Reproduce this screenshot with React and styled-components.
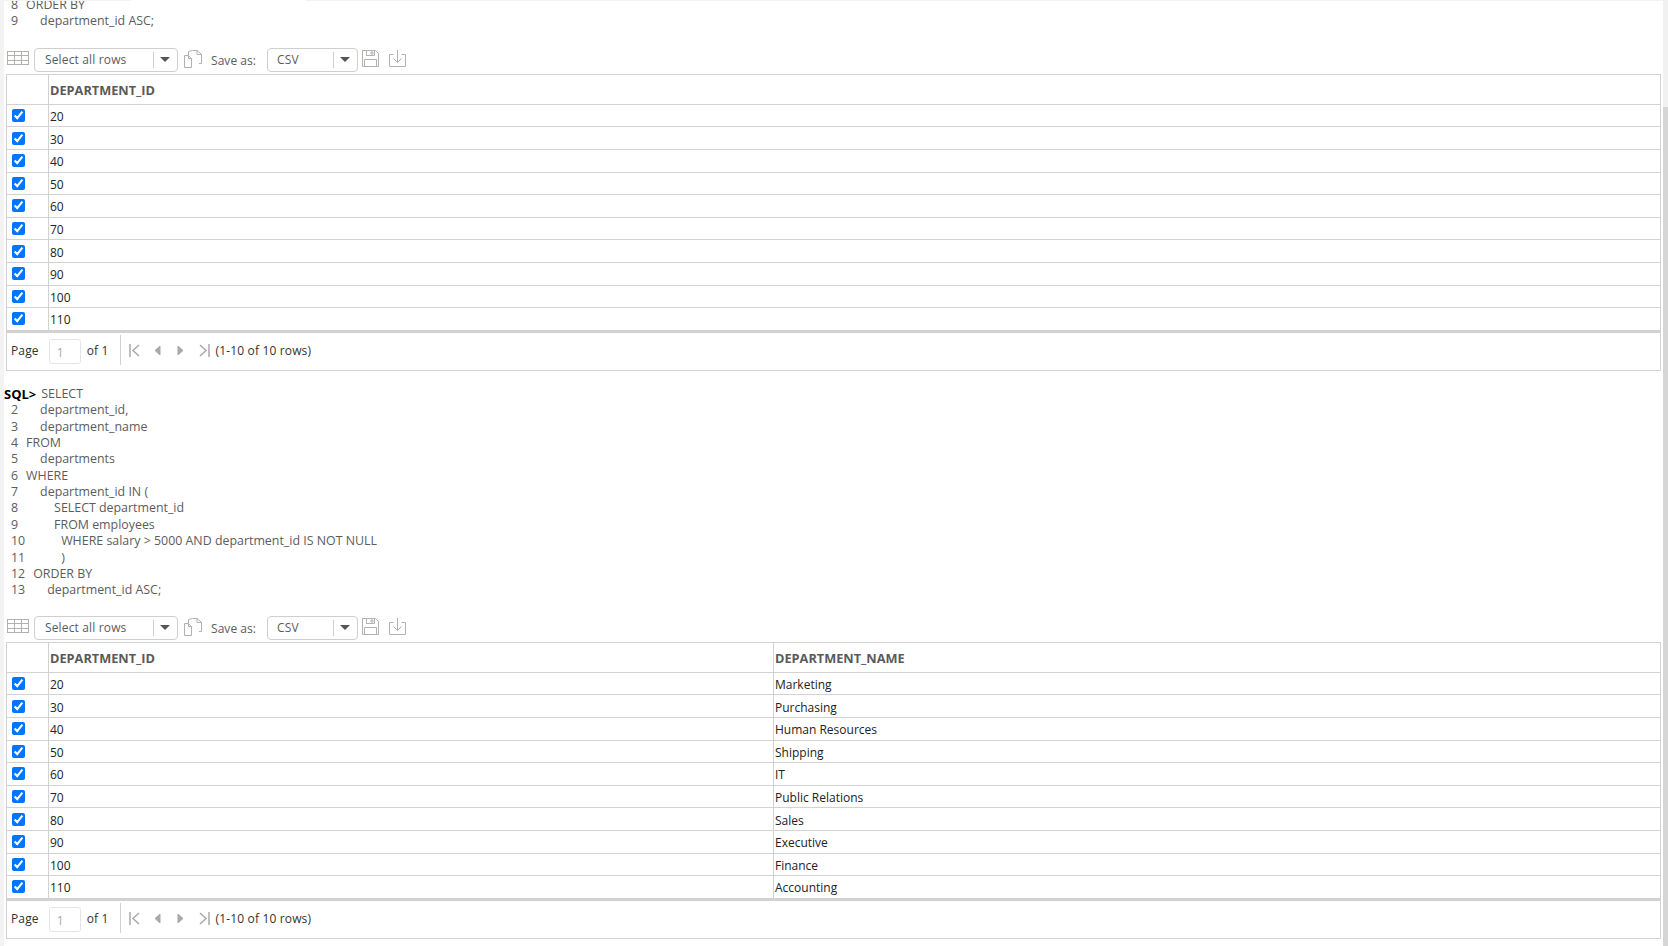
import React from 'react';
import styled, { createGlobalStyle } from 'styled-components';

const GlobalStyle = createGlobalStyle`
  html, body {
    margin: 0;
    height: 100%;
    overflow: hidden;
    background: #fff;
  }
  body {
    font-family: "Open Sans", "Noto Sans", "Liberation Sans", sans-serif;
    font-size: 12px;
  }
`;

const Page = styled.div`
  position: relative;
  height: 946px;
  overflow: hidden;
  padding-left: 4px;
  padding-right: 7px;
  background: linear-gradient(to right, #f3f3f3 4px, #fff 4px);
`;

const TopEdge = styled.div`
  position: absolute;
  top: 0;
  left: 0;
  right: 0;
  height: 1px;
  background: linear-gradient(to right, #f3f3f3 131px, #fff 131px, #fff 306px, #f3f3f3 306px);
`;

const ScrollTrack = styled.div`
  position: absolute;
  top: 0;
  right: 0;
  bottom: 0;
  width: 5px;
  background: #f1f1f1;
`;

const ScrollThumb = styled.div`
  margin-top: 107px;
  height: 839px;
  background: #d6d6d6;
`;

const Worksheet = styled.div`
  margin-top: -3px;
`;

const Code = styled.div`
  color: #5c5c5c;
  font-size: 12.4px;
  line-height: 16.4px;
  margin-top: ${p => p.$top || 0}px;
  margin-bottom: ${p => p.$gap}px;
`;

const CodeLine = styled.div`
  display: flex;
  white-space: pre;
  height: 16.4px;
  padding-left: 7px;
`;

const LineNo = styled.span`
  margin-right: 8px;
`;

const Statement = styled.span`
  margin-left: ${p => p.$indent * 14}px;
`;

const Prompt = styled.span`
  margin-left: -7px;
  margin-right: 5px;
  font-size: 13px;
  font-weight: 700;
  color: #000;
`;

const Toolbar = styled.div`
  display: flex;
  align-items: center;
  height: 24px;
  padding-left: 3px;
  margin-bottom: 2.5px;
  color: #5c5c5c;
`;

const Select = styled.div`
  display: flex;
  align-items: center;
  box-sizing: border-box;
  width: ${p => p.$width}px;
  height: 24px;
  margin-left: ${p => p.$left}px;
  border: 1px solid #cfcfcf;
  border-radius: 4px;
  background: #fff;
`;

const SelectValue = styled.div`
  flex: 1;
  padding-left: ${p => p.$pad}px;
  letter-spacing: 0.15px;
`;

const SelectArrow = styled.div`
  display: flex;
  align-items: center;
  justify-content: center;
  width: 24px;
  height: 16px;
  padding-right: 1px;
  box-sizing: border-box;
  border-left: 1px solid #cfcfcf;
  &::after {
    content: "";
    border-left: 5px solid transparent;
    border-right: 5px solid transparent;
    border-top: 5px solid #555;
  }
`;

const ToolIcon = styled.svg`
  flex: none;
  margin-left: ${p => p.$left}px;
  margin-top: ${p => p.$up * -2}px;
  fill: none;
  stroke: #b4b0ae;
  stroke-width: 1;
`;

const SaveLabel = styled.span`
  margin-left: 8px;
  padding-top: 2px;
  letter-spacing: 0.05px;
`;

const Grid = styled.div`
  margin-left: 2px;
  border: 1px solid #d2d2d2;
`;

const Row = styled.div`
  display: flex;
  box-sizing: border-box;
  height: ${p => (p.$head ? 29.5 : 22.6)}px;
  border-bottom: 1px solid #d2d2d2;
`;

const CheckCell = styled.div`
  display: flex;
  align-items: center;
  flex: none;
  width: 42px;
  padding-left: 5px;
  border-right: 1px solid #d2d2d2;
  box-sizing: border-box;
`;

const Check = styled.input`
  width: 13px;
  height: 13px;
  margin: 0;
`;

const Cell = styled.div`
  display: flex;
  align-items: center;
  flex: 1;
  box-sizing: border-box;
  padding-left: 1px;
  padding-top: ${p => (p.$head ? 1 : 2)}px;
  font-size: ${p => (p.$head ? 12.75 : 12)}px;
  color: ${p => (p.$head ? '#5a5a5a' : '#222')};
  font-weight: ${p => (p.$head ? 700 : 400)};
  ${p => p.$width && `flex: none; width: ${p.$width}px; border-right: 1px solid #d2d2d2;`}
`;

const Pager = styled.div`
  display: flex;
  align-items: center;
  height: 37px;
  padding-left: 4px;
  padding-bottom: 2px;
  box-sizing: border-box;
  height: 39px;
  border-top: 2px solid #d2d2d2;
  color: #333;
  letter-spacing: 0.15px;
`;

const PageInput = styled.div`
  box-sizing: border-box;
  width: 32px;
  height: 25px;
  margin: 2px 6px 0 10px;
  padding: 4px 0 0 7px;
  border: 1px solid #e4e4e4;
  border-radius: 3px;
  color: #aaa;
`;

const PagerDivider = styled.div`
  width: 1px;
  height: 30px;
  margin: 0 8px 0 11px;
  background: #d2d2d2;
`;

const PagerIcon = styled.svg`
  flex: none;
  margin-right: ${p => p.$right}px;
  fill: #a9a9a9;
  stroke: #a9a9a9;
`;

const TableIcon = () => (
  <ToolIcon $left={0} $up={2} width="22" height="16" viewBox="0 0 22 16">
    <rect x="0.5" y="1.5" width="21" height="13" />
    <path d="M0 5.5h22M0 10.5h22M7.5 1v14M14.5 1v14" />
  </ToolIcon>
);

const CopyIcon = () => (
  <ToolIcon $left={5} $up={1} width="20" height="20" viewBox="0 0 20 20">
    <path d="M1.5 6.5h4l3 3v9h-7z" />
    <path d="M5.5 6.5v-4l4-1h4.5l4.5 4v9h-2.5M14 1.5v4h4.5" />
    <path d="M5.5 6.5v3h3" />
  </ToolIcon>
);

const SaveIcon = () => (
  <ToolIcon $left={3} $up={1} width="19" height="19" viewBox="0 0 19 19">
    <path d="M1.5 1.5h13l3 3v13h-16z" />
    <path d="M5.5 1.5v5h8v-5M10 3h2v2h-2zM3.5 10.5h12v7h-12z" />
  </ToolIcon>
);

const DownloadIcon = () => (
  <ToolIcon $left={8} $up={1} width="19" height="19" viewBox="0 0 19 19">
    <path d="M5.5 5.5h-4v12h16v-12h-4" />
    <path d="M9.5 1v12M5.5 9.5l4 4 4-4" />
  </ToolIcon>
);

const FirstIcon = () => (
  <PagerIcon $right={14} width="11" height="13" viewBox="0 0 11 13">
    <path d="M1 0v13" strokeWidth="1.5" fill="none" />
    <path d="M10 1L4 6.5l6 5.5" strokeWidth="1.5" fill="none" />
  </PagerIcon>
);

const PrevIcon = () => (
  <PagerIcon $right={16} width="7" height="9" viewBox="0 0 7 9">
    <path d="M6 0v9L1 4.5z" />
  </PagerIcon>
);

const NextIcon = () => (
  <PagerIcon $right={15} width="7" height="9" viewBox="0 0 7 9">
    <path d="M1 0v9l5-4.5z" />
  </PagerIcon>
);

const LastIcon = () => (
  <PagerIcon $right={6} width="11" height="13" viewBox="0 0 11 13">
    <path d="M10 0v13" strokeWidth="1.5" fill="none" />
    <path d="M1 1l6 5.5L1 12" strokeWidth="1.5" fill="none" />
  </PagerIcon>
);

const SelectBox = ({ width, left, pad, value }) => (
  <Select $width={width} $left={left}>
    <SelectValue $pad={pad}>{value}</SelectValue>
    <SelectArrow />
  </Select>
);

const ResultToolbar = () => (
  <Toolbar>
    <TableIcon />
    <SelectBox width={144} left={5} pad={10} value="Select all rows" />
    <CopyIcon />
    <SaveLabel>Save as:</SaveLabel>
    <SelectBox width={91} left={11} pad={9} value="CSV" />
    <SaveIcon />
    <DownloadIcon />
  </Toolbar>
);

const ResultGrid = ({ rows, withName }) => (
  <Grid>
    <Row $head>
      <CheckCell />
      <Cell $head $width={withName ? 725 : undefined}>DEPARTMENT_ID</Cell>
      {withName && <Cell $head>DEPARTMENT_NAME</Cell>}
    </Row>
    {rows.map(([id, name]) => (
      <Row key={id}>
        <CheckCell>
          <Check type="checkbox" checked readOnly />
        </CheckCell>
        <Cell $width={withName ? 725 : undefined}>{id}</Cell>
        {withName && <Cell>{name}</Cell>}
      </Row>
    ))}
    <Pager>
      Page
      <PageInput>1</PageInput>
      of 1
      <PagerDivider />
      <FirstIcon />
      <PrevIcon />
      <NextIcon />
      <LastIcon />
      (1-10 of 10 rows)
    </Pager>
  </Grid>
);

const departments = [
  ['20', 'Marketing'],
  ['30', 'Purchasing'],
  ['40', 'Human Resources'],
  ['50', 'Shipping'],
  ['60', 'IT'],
  ['70', 'Public Relations'],
  ['80', 'Sales'],
  ['90', 'Executive'],
  ['100', 'Finance'],
  ['110', 'Accounting'],
];

const query = [
  [2, 1, 'department_id,'],
  [3, 1, 'department_name'],
  [4, 0, 'FROM'],
  [5, 1, 'departments'],
  [6, 0, 'WHERE'],
  [7, 1, 'department_id IN ('],
  [8, 2, 'SELECT department_id'],
  [9, 2, 'FROM employees'],
  [10, 2, 'WHERE salary > 5000 AND department_id IS NOT NULL'],
  [11, 2, ')'],
  [12, 0, 'ORDER BY'],
  [13, 1, 'department_id ASC;'],
];

const Line = ({ no, indent, text }) => (
  <CodeLine>
    <LineNo>{no}</LineNo>
    <Statement $indent={indent}>{text}</Statement>
  </CodeLine>
);

const App = () => (
  <>
    <GlobalStyle />
    <Page>
      <Worksheet>
        <Code $gap={18}>
          <Line no={8} indent={0} text="ORDER BY" />
          <Line no={9} indent={1} text="department_id ASC;" />
        </Code>
        <ResultToolbar />
        <ResultGrid rows={departments} />
        <Code $top={15} $gap={17}>
          <CodeLine>
            <Prompt>SQL&gt;</Prompt>
            SELECT
          </CodeLine>
          {query.map(([no, indent, text]) => (
            <Line key={no} no={no} indent={indent} text={text} />
          ))}
        </Code>
        <ResultToolbar />
        <ResultGrid rows={departments} withName />
      </Worksheet>
      <TopEdge />
      <ScrollTrack>
        <ScrollThumb />
      </ScrollTrack>
    </Page>
  </>
);

export default App;
